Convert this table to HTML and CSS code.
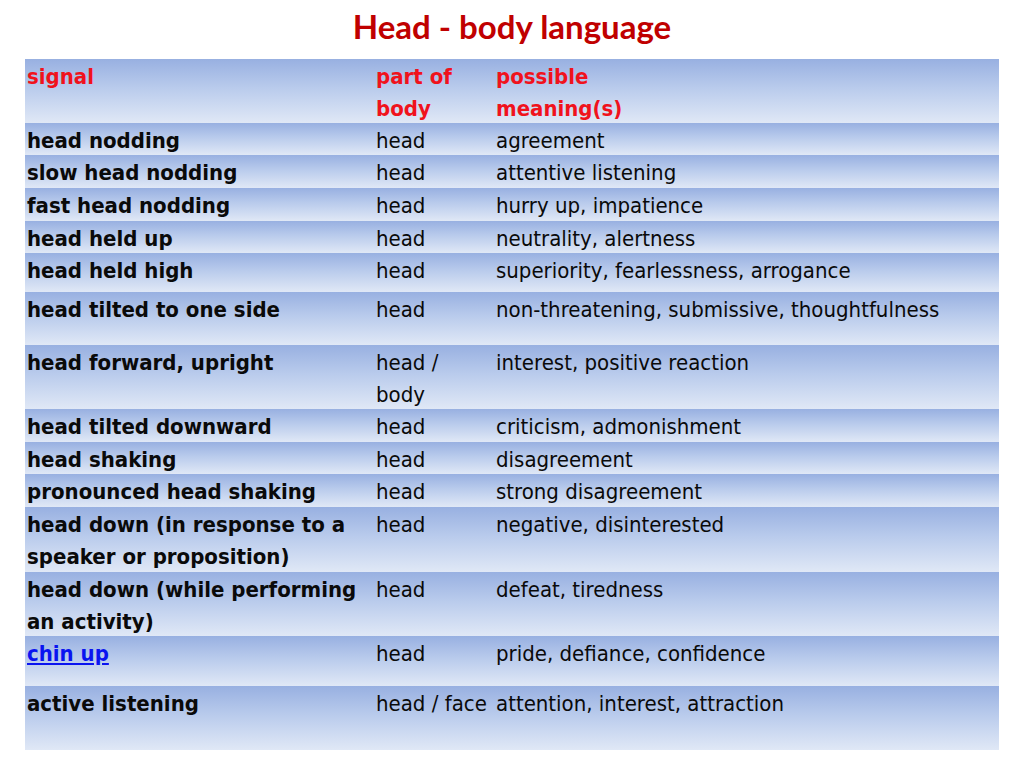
FILE: index.html
```html
<!DOCTYPE html>
<html lang="en">
<head>
<meta charset="utf-8">
<title>Head - body language</title>
<link rel="stylesheet" href="styles.css">
</head>
<body>
<h1 class="title">Head - body language</h1>
<table class="signals">
  <colgroup>
    <col class="c-signal">
    <col class="c-part">
    <col class="c-meaning">
  </colgroup>
  <tr class="head-row h64">
    <td><span class="c">signal</span></td>
    <td><span class="c">part of<br>body</span></td>
    <td><span class="c">possible<br>meaning(s)</span></td>
  </tr>
  <tr class="h32"><td class="sig"><span class="c">head nodding</span></td><td><span class="c">head</span></td><td><span class="c">agreement</span></td></tr>
  <tr class="h33"><td class="sig"><span class="c">slow head nodding</span></td><td><span class="c">head</span></td><td><span class="c">attentive listening</span></td></tr>
  <tr class="h33"><td class="sig"><span class="c">fast head nodding</span></td><td><span class="c">head</span></td><td><span class="c">hurry up, impatience</span></td></tr>
  <tr class="h32"><td class="sig"><span class="c">head held up</span></td><td><span class="c">head</span></td><td><span class="c">neutrality, alertness</span></td></tr>
  <tr class="h39"><td class="sig"><span class="c">head held high</span></td><td><span class="c">head</span></td><td><span class="c">superiority, fearlessness, arrogance</span></td></tr>
  <tr class="h53"><td class="sig"><span class="c">head tilted to one side</span></td><td><span class="c">head</span></td><td><span class="c">non-threatening, submissive, thoughtfulness</span></td></tr>
  <tr class="h64"><td class="sig"><span class="c">head forward, upright</span></td><td><span class="c">head /<br>body</span></td><td><span class="c">interest, positive reaction</span></td></tr>
  <tr class="h33"><td class="sig"><span class="c">head tilted downward</span></td><td><span class="c">head</span></td><td><span class="c">criticism, admonishment</span></td></tr>
  <tr class="h32"><td class="sig"><span class="c">head shaking</span></td><td><span class="c">head</span></td><td><span class="c">disagreement</span></td></tr>
  <tr class="h33"><td class="sig"><span class="c">pronounced head shaking</span></td><td><span class="c">head</span></td><td><span class="c">strong disagreement</span></td></tr>
  <tr class="h65"><td class="sig"><span class="c">head down (in response to a speaker or proposition)</span></td><td><span class="c">head</span></td><td><span class="c">negative, disinterested</span></td></tr>
  <tr class="h64"><td class="sig"><span class="c">head down (while performing an activity)</span></td><td><span class="c">head</span></td><td><span class="c">defeat, tiredness</span></td></tr>
  <tr class="h50"><td class="sig"><span class="c"><a class="link" href="#chin-up">chin up</a></span></td><td><span class="c">head</span></td><td><span class="c">pride, defiance, confidence</span></td></tr>
  <tr class="h64"><td class="sig"><span class="c">active listening</span></td><td class="nowrap"><span class="c">head / face</span></td><td><span class="c">attention, interest, attraction</span></td></tr>
</table>
</body>
</html>
```

FILE: styles.css
```css
html, body {
  margin: 0;
  padding: 0;
  background: #ffffff;
}

.title {
  margin: 6px 0 13px;
  height: 40px;
  line-height: 40px;
  text-align: center;
  font-family: Lato, "Open Sans", sans-serif;
  font-weight: 700;
  font-size: 33px;
  color: #c00000;
}

.signals {
  margin-left: 25px;
  width: 974px;
  border-collapse: collapse;
  border-spacing: 0;
  table-layout: fixed;
  font-family: "DejaVu Sans Condensed", "DejaVu Sans", sans-serif;
  font-stretch: condensed;
  font-size: 22px;
  line-height: 32px;
  color: #0a0a0a;
}

.c-signal { width: 350px; }
.c-part { width: 120px; }
.c-meaning { width: 504px; }

.signals td {
  vertical-align: top;
  padding: 0 0 0 1px;
  background: linear-gradient(180deg, #98b0e1 0%, #b9cbec 45%, #e0e8f6 100%);
}

.signals td:first-child {
  padding-left: 2px;
}

.c {
  display: block;
  padding-top: 2px;
  margin-bottom: -2px;
}

.head-row td {
  color: #f0121c;
  font-weight: 700;
}

.sig {
  font-weight: 700;
}

.nowrap {
  white-space: nowrap;
}

.link {
  color: #0a14f0;
  text-decoration: underline;
}

.h32 td { height: 32px; }
.h33 td { height: 33px; }
.h39 td { height: 39px; }
.h50 td { height: 50px; }
.h53 td { height: 53px; }
.h64 td { height: 64px; }
.h65 td { height: 65px; }
```
